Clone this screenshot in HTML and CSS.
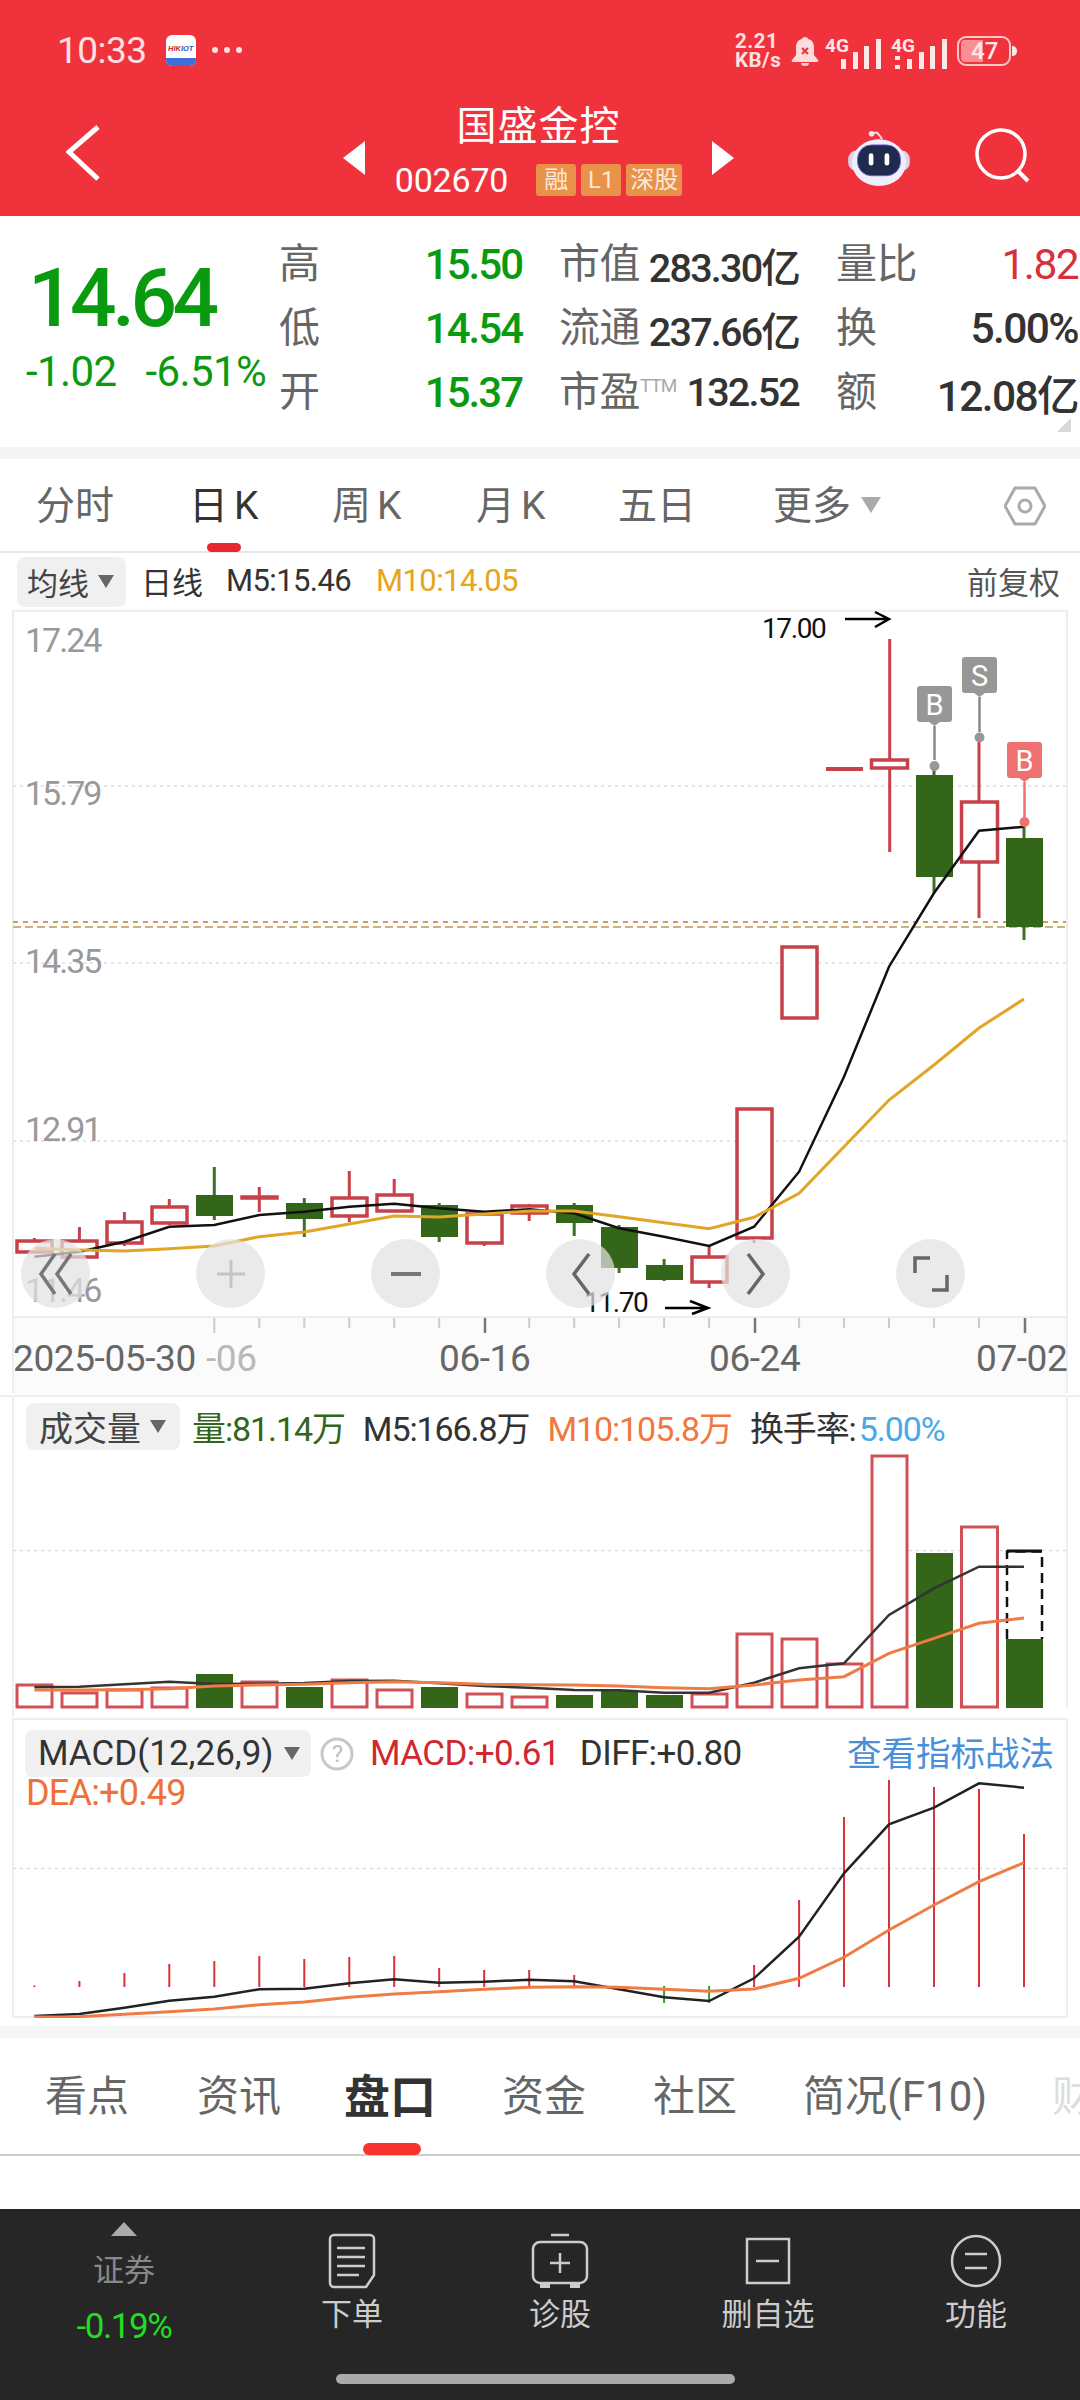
FILE: index.html
```html
<!DOCTYPE html>
<html lang="zh-CN">
<head>
<meta charset="utf-8">
<title>国盛金控 002670</title>
<link rel="stylesheet" href="styles.css">
</head>
<body>
<header class="hdr">
  <div class="status">
    <div class="status-left">
      <span class="clock">10:33</span>
      <svg class="hik" width="30" height="31" viewBox="0 0 30 31"><rect width="30" height="31" rx="6" fill="#fff"/><path d="M0 23h30v2a6 6 0 0 1-6 6H6a6 6 0 0 1-6-6z" fill="#3f6fd8"/><text x="2" y="16" class="hik-t"><tspan fill="#c8281e">HIK</tspan><tspan fill="#2a5cb8">IOT</tspan></text></svg>
      <span class="dots"><i></i><i></i><i></i></span>
    </div>
    <div class="status-right">
      <span class="net"><b>2.21</b><b>KB/s</b></span>
      <svg width="28" height="30" viewBox="0 0 28 30"><path d="M14 1c2 0 3 1 3 2 5 1 6 5 6 9v7l4 5c1 1 0 2-1 2H2c-1 0-2-1-1-2l4-5v-7c0-4 1-8 6-9 0-1 1-2 3-2zM10 27h8a4 3 0 0 1-8 0z" fill="#fcdcdc"/><path d="M11 12l6 6m0-6l-6 6" stroke="#e8323c" stroke-width="2"/></svg>
      <svg width="60" height="38" viewBox="0 -6 60 38"><text x="0" y="14" class="sig-t">4G</text><path d="M16 21h5v10h-5zM28 14h5v17h-5zM39 8h5v23h-5zM51 1h5v30h-5z" fill="#fde8e8"/></svg>
      <svg width="60" height="38" viewBox="0 -6 60 38"><text x="0" y="14" class="sig-t">4G</text><path d="M4 18h5v4H4zM4 27h5v4H4zM16 21h5v10h-5zM28 14h5v17h-5zM39 8h5v23h-5zM51 1h5v30h-5z" fill="#fde8e8"/></svg>
      <svg class="batt" width="61" height="32" viewBox="0 0 61 32"><rect x="1" y="2" width="52" height="28" rx="8" fill="none" stroke="#fbc8c8" stroke-width="2"/><path d="M8 5h18v22H8a4 4 0 0 1-4-4V9a4 4 0 0 1 4-4z" fill="#f88f95"/><path d="M55 11c3 0 5 2 5 5s-2 5-5 5z" fill="#fde8e8"/><text x="14" y="24" class="batt-t">47</text></svg>
    </div>
  </div>
  <div class="nav">
    <svg class="nav-back" width="40" height="60" viewBox="0 0 40 60"><path d="M32 5L3 30l29 27" fill="none" stroke="#fff" stroke-width="5"/></svg>
    <div class="nav-mid">
      <svg width="22" height="34" viewBox="0 0 22 34"><path d="M22 0v34L0 17z" fill="#fff"/></svg>
      <div class="nav-title">
        <div class="name">国盛金控</div>
        <div class="code-row">
          <span class="code">002670</span>
          <span class="tags"><span class="tag">融</span><span class="tag">L1</span><span class="tag">深股</span></span>
        </div>
      </div>
      <svg width="22" height="34" viewBox="0 0 22 34"><path d="M0 0v34l22-17z" fill="#fff"/></svg>
    </div>
    <div class="nav-right">
      <svg width="62" height="56" viewBox="0 0 66 60"><path d="M26 6c1-4 5-4 6-2s3 2 4 6" fill="none" stroke="#e6e4f5" stroke-width="2"/><circle cx="25" cy="4" r="3" fill="#e6e4f5"/><rect x="0" y="22" width="66" height="22" rx="9" fill="#d6d4ee"/><ellipse cx="33" cy="35" rx="29" ry="25" fill="#f0eefa"/><rect x="10" y="16" width="46" height="33" rx="15" fill="#1e2a4e" stroke="#6a5cd8" stroke-width="1"/><rect x="22" y="25" width="5" height="13" rx="2.5" fill="#fff"/><rect x="39" y="25" width="5" height="13" rx="2.5" fill="#fff"/></svg>
      <svg width="56" height="60" viewBox="0 0 56 60"><circle cx="26" cy="26" r="24" fill="none" stroke="#fff" stroke-width="3.5"/><path d="M43 43l10 10" stroke="#fff" stroke-width="4"/></svg>
    </div>
  </div>
</header>

<section class="stats">
  <div class="quote">
    <div class="price">14.64</div>
    <div class="chg"><span>-1.02</span><span>-6.51%</span></div>
  </div>
  <div class="col col-a">
    <div class="st"><span class="lb">高</span><span class="v g">15.50</span></div>
    <div class="st"><span class="lb">低</span><span class="v g">14.54</span></div>
    <div class="st"><span class="lb">开</span><span class="v g">15.37</span></div>
  </div>
  <div class="col col-b">
    <div class="st"><span class="lb">市值</span><span class="v">283.30亿</span></div>
    <div class="st"><span class="lb">流通</span><span class="v">237.66亿</span></div>
    <div class="st"><span class="lb">市盈<sup class="ttm">TTM</sup></span><span class="v">132.52</span></div>
  </div>
  <div class="col col-c">
    <div class="st"><span class="lb">量比</span><span class="v r">1.82</span></div>
    <div class="st"><span class="lb">换</span><span class="v">5.00%</span></div>
    <div class="st"><span class="lb">额</span><span class="v">12.08亿</span></div>
  </div>
  <svg class="corner" width="14" height="14" viewBox="0 0 14 14"><path d="M14 0v14H0z" fill="#d8d8d8"/></svg>
</section>

<div class="band band-a"></div>

<nav class="ktabs">
  <span class="ktab t1">分时</span>
  <span class="ktab t2 on">日K</span>
  <span class="ktab t3">周K</span>
  <span class="ktab t4">月K</span>
  <span class="ktab t5">五日</span>
  <span class="ktab t6">更多<i class="tri tri-lg"></i></span>
  <svg class="hex" width="42" height="40" viewBox="0 0 42 40"><path d="M11 2h20l10 18-10 18H11L1 20z" fill="none" stroke="#aaa" stroke-width="3" stroke-linejoin="round"/><circle cx="21" cy="20" r="6" fill="none" stroke="#aaa" stroke-width="3"/></svg>
</nav>

<div class="legend legend-k">
  <span class="pill pill-k">均线<i class="tri"></i></span>
  <span>日线</span>
  <span class="m5">M5:15.46</span>
  <span class="m10">M10:14.05</span>
  <span class="fq">前复权</span>
</div>

<section class="kpanel">
  <svg class="chart" width="1080" height="785" viewBox="0 610 1080 785">
    <rect x="13" y="1318" width="1054" height="76" fill="#fbfbfb"/>
    <path class="frame" d="M13 1393V611H1067V1393M13 1317H1067"/>
    <path class="grid" d="M13 786H1067M13 963H1067M13 1141H1067"/>
    <path class="ref1" d="M13 922H1066"/>
    <path class="ref2" d="M13 927H1066"/>
    <text class="ylab" x="25" y="652">17.24</text>
    <text class="ylab" x="25" y="805">15.79</text>
    <text class="ylab" x="25" y="973">14.35</text>
    <text class="ylab" x="25" y="1141">12.91</text>
    <text class="ylab" x="25" y="1302">11.46</text>
    <path class="wick-r" d="M34.4 1238V1241M79.4 1227V1241M124.4 1212V1246M169.3 1199V1225M259.3 1187V1212M349.3 1171V1222M394.2 1179V1195M484.2 1213V1246M529.2 1204V1221M709.1 1246V1288M754.1 1109V1243M889.7 639V852M979 737V918"/>
    <path class="wick-g" d="M214.3 1167V1220M304.3 1198V1237M439.2 1203V1242M574.2 1203V1236M619.1 1225V1273M664.1 1259V1281M934 766V893M1024 826V940"/>
    <path class="body-r" d="M17 1241h35v11h-35zM62 1241h35v16h-35zM107 1222h35v21h-35zM152 1207h35v16h-35zM242 1197h35v1h-35zM332 1198h35v18h-35zM377 1195h35v16h-35zM467 1214h35v29h-35zM512 1206h35v7h-35zM692 1257h35v25h-35zM737 1109h35v129h-35zM782 947h35v71h-35zM871.5 760h36v8h-36zM961.5 802h36v60h-36z"/>
    <path class="dash-r" d="M826 769H863"/>
    <path class="body-g" d="M196 1195h37v21h-37zM286 1203h37v16h-37zM421 1205h37v32h-37zM556 1205h37v18h-37zM601 1227h37v41h-37zM646 1265h37v15h-37zM916 775h37v102h-37zM1006 838h37v89h-37z"/>
    <path class="ma5" d="M34.4 1256.7L79.4 1251.7 124.4 1241.7 169.3 1226.7 214.3 1225 259.3 1215 304.3 1211.7 349.3 1206.7 394.2 1203.7 439.2 1208.3 484.2 1211.7 529.2 1209.3 574.2 1213.3 619.1 1228.3 664.1 1236.7 709.1 1246 754.1 1226.7 799.1 1171.7 844 1076.7 889 966.7 934 893 979 830.7 1024 826.7"/>
    <path class="ma10" d="M34.4 1248.3L79.4 1250 124.4 1251 169.3 1248.7 214.3 1246 259.3 1236.7 304.3 1232 349.3 1224 394.2 1216 439.2 1217 484.2 1214 529.2 1211 574.2 1211 619.1 1216.7 664.1 1222.7 709.1 1228.7 754.1 1217.3 799.1 1193.3 844 1146.7 889 1100 934 1065 979 1028 1024 999"/>
    <g class="flag-grey">
      <path d="M920 686h29a3 3 0 0 1 3 3v30a3 3 0 0 1-3 3h-9l-5.500 4-5.500-4h-9a3 3 0 0 1-3-3v-30a3 3 0 0 1 3-3z"/>
      <path class="stem" d="M934.500 726V760"/><circle cx="934.500" cy="766" r="5"/>
      <path d="M965 657h29a3 3 0 0 1 3 3v30a3 3 0 0 1-3 3h-9l-5.500 4-5.500-4h-9a3 3 0 0 1-3-3v-30a3 3 0 0 1 3-3z"/>
      <path class="stem" d="M979.500 697V732"/><circle cx="979.500" cy="737.500" r="5"/>
    </g>
    <g class="flag-red">
      <path d="M1010 742h29a3 3 0 0 1 3 3v30a3 3 0 0 1-3 3h-9l-5.500 4-5.500-4h-9a3 3 0 0 1-3-3v-30a3 3 0 0 1 3-3z"/>
      <path class="stem" d="M1024.500 782V818"/><circle cx="1024.500" cy="822" r="5"/>
    </g>
    <text class="flag-t" x="934.500" y="715">B</text>
    <text class="flag-t" x="979.500" y="686">S</text>
    <text class="flag-t" x="1024.500" y="771">B</text>
    <text class="mark" x="762" y="638">17.00</text>
    <path class="arrow" d="M845 619H889M875 612L889 619 875 627"/>
    <text class="mark" x="584" y="1312">11.70</text>
    <path class="arrow" d="M665 1308H708M690 1301L708 1308 692 1314"/>
    <path class="tick-l" d="M214.300 1318V1333"/>
    <path class="tick-s" d="M259.300 1318V1328M304.300 1318V1328M349.300 1318V1328M394.200 1318V1328M439.200 1318V1328M529.200 1318V1328M574.200 1318V1328M619.100 1318V1328M664.100 1318V1328M709.100 1318V1328M799.100 1318V1328M844 1318V1328M889 1318V1328M934 1318V1328M979 1318V1328"/>
    <path class="tick-d" d="M485 1318V1333M755 1318V1333M1025 1318V1333"/>
    <text class="xlab" x="13" y="1371">2025-05-30</text>
    <text class="xlab xlab-f" x="206" y="1371">-06</text>
    <text class="xlab" x="439" y="1371">06-16</text>
    <text class="xlab" x="709" y="1371">06-24</text>
    <text class="xlab" x="976" y="1371">07-02</text>
  </svg>
  <div class="ctrls">
    <span class="ctrl"><svg width="40" height="44" viewBox="0 0 40 44"><path d="M19 2L5 22l14 20M35 2L21 22l14 20" fill="none" stroke="#777" stroke-width="3.500"/></svg></span>
    <span class="ctrl"><svg width="32" height="32" viewBox="0 0 32 32"><path d="M16 2v28M2 16h28" stroke="#c4c4c4" stroke-width="3"/></svg></span>
    <span class="ctrl"><svg width="32" height="32" viewBox="0 0 32 32"><path d="M1 16h30" stroke="#777" stroke-width="4"/></svg></span>
    <span class="ctrl"><svg width="22" height="44" viewBox="0 0 22 44"><path d="M19 2L4 22l15 20" fill="none" stroke="#666" stroke-width="3.500"/></svg></span>
    <span class="ctrl"><svg width="22" height="44" viewBox="0 0 22 44"><path d="M3 2l15 20L3 42" fill="none" stroke="#666" stroke-width="3.500"/></svg></span>
    <span class="ctrl"><svg width="36" height="36" viewBox="0 0 36 36"><path d="M17 2H2v15M19 34h15V19" fill="none" stroke="#666" stroke-width="3.500"/></svg></span>
  </div>
</section>

<section class="vpanel">
  <div class="legend legend-v">
    <span class="pill pill-v">成交量<i class="tri"></i></span>
    <span class="vol">量:81.14万</span>
    <span>M5:166.8万</span>
    <span class="o">M10:105.8万</span>
    <span class="hs">换手率:<b class="bl">5.00%</b></span>
  </div>
  <svg class="sub" width="1080" height="267" viewBox="0 1453 1080 267">
    <path class="frame-v" d="M13 1453V1716M1067 1453V1708"/>
    <path class="grid" d="M13 1550.500H1067"/>
    <path class="vbar-r" d="M17 1685h35v22h-35zM62 1693h35v14h-35zM107 1690h35v17h-35zM152 1688h35v19h-35zM242 1682h35v25h-35zM332 1680h35v27h-35zM377 1690h35v17h-35zM467 1694h35v13h-35zM512 1697h35v10h-35zM692 1694h35v13h-35zM737 1634h35v73h-35zM782 1639h35v68h-35zM827 1664h35v43h-35zM872 1456h35v251h-35zM961.500 1527h36v180h-36z"/>
    <path class="vbar-g" d="M196 1674h37v34h-37zM421 1687h37v21h-37zM286 1687h37v21h-37zM556 1695h37v13h-37zM601 1690h37v18h-37zM646 1695h37v13h-37zM916 1553h37v155h-37zM1006 1639h37v69h-37z"/>
    <path class="vdash" d="M1007 1639V1551.500H1042V1639"/>
    <path class="vcap" d="M1007 1551H1042"/>
    <path class="vm5" d="M34.400 1687.300L79.400 1686.700 124.400 1684.300 169.300 1681.700 214.300 1684 259.300 1683.700 304.300 1683 349.300 1681 394.200 1680.700 439.200 1683.300 484.200 1686 529.200 1687.700 574.200 1690 619.100 1690.300 664.100 1692.700 709.100 1692.700 754.100 1682.700 799.100 1668.300 844 1663.300 889 1615 934 1588.300 979 1566.700 1024 1566.700"/>
    <path class="vm10" d="M34.400 1690L79.400 1690 124.400 1689.700 169.300 1688.700 214.300 1686 259.300 1685 304.300 1684.300 349.300 1682.700 394.200 1681.700 439.200 1682.700 484.200 1684.300 529.200 1684.700 574.200 1685 619.100 1686 664.100 1687.700 709.100 1688.700 754.100 1685 799.100 1680 844 1676.700 889 1653.300 934 1638.300 979 1623.300 1024 1618"/>
  </svg>
</section>

<section class="mpanel">
  <div class="legend legend-m">
    <span class="pill pill-m">MACD(12,26,9)<i class="tri"></i></span>
    <svg class="help" width="34" height="34" viewBox="0 0 34 34"><circle cx="17" cy="17" r="15" fill="none" stroke="#c8c8c8" stroke-width="3"/><text class="help-t" x="17" y="25">?</text></svg>
    <span class="dred">MACD:+0.61</span>
    <span>DIFF:+0.80</span>
    <span class="link">查看指标战法</span>
  </div>
  <div class="dea">DEA:+0.49</div>
  <svg class="macd" width="1080" height="238" viewBox="0 1780 1080 238">
    <path class="grid" d="M13 1868.500H1067"/>
    <path class="hist-r" d="M34.400 1985.500V1987M79.400 1981V1987M124.400 1973V1987M169.300 1964V1987M214.300 1961V1987M259.300 1956V1987M304.300 1959V1987M349.300 1957V1987M394.200 1956V1987M439.200 1968V1987M484.200 1970V1987M529.200 1970V1987M574.200 1975V1987M754.100 1965V1987M799.100 1900V1987M844 1817V1987M889 1773V1987M934 1787V1987M979 1789V1987M1024 1834V1987"/>
    <path class="hist-g" d="M664.100 1986V2003M709.100 1986V2003"/>
    <path class="dif" d="M34.400 2016L79.400 2014 124.400 2007.700 169.300 2000.700 214.300 1996.700 259.300 1989.300 304.300 1988.700 349.300 1983.300 394.200 1979.300 439.200 1982.700 484.200 1981.700 529.200 1979.700 574.200 1981.300 619.100 1989.300 664.100 1997.300 709.100 2001 754.100 1978.300 799.100 1936.700 844 1873.300 889 1824.300 934 1807.700 979 1783.300 1024 1787.700"/>
    <path class="dea-l" d="M34.400 2017L79.400 2016.700 124.400 2014.300 169.300 2011.700 214.300 2009 259.300 2004.700 304.300 2002 349.300 1997.300 394.200 1994 439.200 1991.700 484.200 1989.300 529.200 1987.300 574.200 1986.700 619.100 1987.300 664.100 1989.300 709.100 1991.300 754.100 1989 799.100 1978.300 844 1957.300 889 1930 934 1905 979 1881.700 1024 1862.700"/>
  </svg>
</section>

<div class="band band-b"></div>

<nav class="dtabs">
  <span class="dtab">看点</span>
  <span class="dtab">资讯</span>
  <span class="dtab on">盘口</span>
  <span class="dtab">资金</span>
  <span class="dtab">社区</span>
  <span class="dtab">简况(F10)</span>
  <span class="dtab fade">财</span>
</nav>

<div class="blank"></div>

<footer class="foot">
  <div class="fcol f-idx">
    <svg width="26" height="14" viewBox="0 0 26 14"><path d="M13 0l13 14H0z" fill="#aaa"/></svg>
    <span class="f-name">证券</span>
    <span class="f-pct">-0.19%</span>
  </div>
  <div class="fcol">
    <svg class="f-ico" width="48" height="56" viewBox="0 0 48 56"><path d="M6 2h36a4 4 0 0 1 4 4v36l-8 12H6a4 4 0 0 1-4-4V6a4 4 0 0 1 4-4z" fill="none" stroke="#ccc" stroke-width="2.500"/><path d="M9 15h28M9 24h28M9 33h28M9 42h22" stroke="#ccc" stroke-width="2.500"/></svg>
    <span>下单</span>
  </div>
  <div class="fcol">
    <svg class="f-ico" width="58" height="56" viewBox="0 0 58 56"><path d="M20 2h18" stroke="#ccc" stroke-width="2.500"/><rect x="2" y="9" width="54" height="41" rx="7" fill="none" stroke="#ccc" stroke-width="2.500"/><path d="M29 20v20M19 30h20" stroke="#ccc" stroke-width="2.500"/><path d="M9 50h10v5H9zM39 50h10v5H39z" fill="#ccc"/></svg>
    <span>诊股</span>
  </div>
  <div class="fcol">
    <svg class="f-ico" width="46" height="56" viewBox="0 0 46 56"><rect x="2" y="6" width="42" height="44" fill="none" stroke="#ccc" stroke-width="2.500"/><path d="M11 28h23" stroke="#ccc" stroke-width="2.500"/></svg>
    <span>删自选</span>
  </div>
  <div class="fcol">
    <svg class="f-ico" width="52" height="56" viewBox="0 0 52 56"><ellipse cx="26" cy="28" rx="24" ry="25" fill="none" stroke="#ccc" stroke-width="2.500"/><path d="M15 21h22M15 35h22" stroke="#ccc" stroke-width="2.500"/></svg>
    <span>功能</span>
  </div>
  <div class="homebar"></div>
</footer>
</body>
</html>
```
FILE: styles.css
```css
* { box-sizing: border-box; }
html, body { margin: 0; padding: 0; }
body {
  width: 1080px;
  height: 2400px;
  overflow: hidden;
  background: #fff;
  color: #333;
  font-family: Roboto, "Noto Sans CJK SC", sans-serif;
  position: relative;
}
svg { display: block; }
i { font-style: normal; }

/* header */
.hdr { height: 216px; background: #f0323c; color: #fff; }
.status { height: 100px; display: flex; justify-content: space-between; align-items: flex-start; padding: 34px 62px 0 57px; }
.status-left { display: flex; align-items: center; height: 32px; }
.clock { font-size: 37px; color: #fde0e0; letter-spacing: -.5px; width: 109px; }
.dots { display: flex; gap: 6px; margin-left: 16px; }
.dots i { width: 6px; height: 6px; border-radius: 50%; background: #fde0e0; }
.hik-t { font: italic 700 7.500px "Liberation Sans", sans-serif; }
.status-right { display: flex; align-items: center; gap: 6px; height: 34px; }
.net { display: flex; flex-direction: column; line-height: 19px; font-size: 20.500px; color: #fde0e0; width: 50px; }
.net b { font-weight: 700; letter-spacing: .5px; }
.sig-t { font: 700 19px Roboto, sans-serif; fill: #fde8e8; }
.batt-t { font: 500 24px Roboto, sans-serif; fill: #fde8e8; }
.nav { height: 116px; display: flex; align-items: center; position: relative; }
.nav-back { position: absolute; left: 66px; top: 22px; }
.nav-mid { display: flex; align-items: center; margin-left: 343px; width: 391px; justify-content: space-between; }
.nav-title { display: flex; flex-direction: column; align-items: center; margin-top: -2px; }
.name { font-size: 40px; line-height: 48px; color: #fff; letter-spacing: 1px; margin-top: -10px; }
.code-row { display: flex; align-items: center; gap: 28px; height: 44px; margin-top: 7px; }
.code { font-size: 34px; letter-spacing: -.2px; color: #fff; }
.tags { display: flex; gap: 5px; }
.tag { height: 32px; line-height: 32px; min-width: 40px; padding: 0 4px; text-align: center; background: #e8924a; border-radius: 3px; font-size: 24px; color: #fde8d8; }
.nav-right { display: flex; gap: 65px; align-items: center; margin-left: 114px; }

/* stats */
.stats { height: 231px; display: flex; position: relative; padding-top: 16px; }
.quote { width: 281px; padding: 26px 0 0 26px; }
.price { font-size: 82px; line-height: 80px; font-weight: 500; color: #0a9a10; letter-spacing: -4.5px; margin-left: 2px; }
.chg { display: flex; gap: 29px; font-size: 42px; line-height: 44px; color: #0a9a10; margin-top: 12px; letter-spacing: -.6px; }
.col { display: flex; flex-direction: column; }
.col-a { width: 241px; margin-right: 39px; }
.col-b { width: 238px; margin-right: 39px; }
.col-c { width: 240px; }
.st { height: 64px; display: flex; justify-content: space-between; align-items: center; }
.lb { font-size: 41px; color: #666; white-space: nowrap; margin: -8px 0 0 -2px; letter-spacing: -.5px; }
.v { font-size: 42px; font-weight: 400; color: #333; letter-spacing: -2px; white-space: nowrap; }
.col-b .v { font-size: 39.500px; letter-spacing: -1.800px; font-weight: 500; }
.v.g { color: #0a9a10; font-weight: 500; }
.v.r { color: #d8303a; }
.col-c .v { font-size: 42.500px; font-weight: 500; letter-spacing: -1.600px; }
.col-c .v.r { font-weight: 400; }
.ttm { font-size: 19px; color: #aaa; letter-spacing: -1px; vertical-align: 14px; line-height: 0; }
.corner { position: absolute; left: 1057px; top: 202px; }
.band { background: #f5f5f5; height: 12px; }

/* k tabs */
.ktabs { height: 94px; border-bottom: 2px solid #e8e8e8; position: relative; display: block; }
.ktab { position: absolute; top: 21px; font-size: 39px; line-height: 52px; color: #666; white-space: nowrap; }
.t1 { left: 36px; } .t2 { left: 189px; } .t3 { left: 332px; } .t4 { left: 476px; } .t5 { left: 618px; } .t6 { left: 773px; }
.t2, .t3, .t4 { letter-spacing: 6px; }
.ktab.on { color: #333; }
.ktab.on::after { content: ""; position: absolute; left: 18px; top: 63px; width: 34px; height: 9px; border-radius: 5px; background: #e8282e; }
.tri { display: inline-block; width: 0; height: 0; border-left: 8px solid transparent; border-right: 8px solid transparent; border-top: 13px solid #666; margin-left: 10px; vertical-align: middle; }
.tri-lg { border-left-width: 10px; border-right-width: 10px; border-top: 16px solid #aaa; margin-top: -8px; }
.hex { position: absolute; left: 1004px; top: 27px; }

/* legends */
.legend { display: flex; align-items: center; white-space: nowrap; color: #333; }
.legend-k { height: 57px; font-size: 31px; gap: 15px; padding-left: 17px; position: relative; }
.legend-k > span:not(.pill) { margin-top: -2px; }
.pill { background: #f0f0f0; border-radius: 8px; display: flex; align-items: center; }
.pill-k { width: 109px; height: 50px; padding-left: 10px; color: #444; }
.pill-k .tri { margin-left: 9px; }
.m5 { letter-spacing: -.6px; margin-left: 8px; }
.m10 { color: #e5a51c; letter-spacing: -.6px; margin-left: 10px; }
.fq { position: absolute; left: 967px; color: #555; }

/* main panel */
.kpanel { position: relative; height: 785px; }
.chart text { font-family: Roboto, sans-serif; }
.frame { fill: none; stroke: #eee; stroke-width: 2; }
.grid { fill: none; stroke: #ddd; stroke-width: 1.500; stroke-dasharray: 3 4; }
.ref1 { stroke: #c8a060; stroke-width: 2; stroke-dasharray: 5 5; fill: none; }
.ref2 { stroke: #d0b080; stroke-width: 2; stroke-dasharray: 8 4; fill: none; }
.chart .ylab { font-size: 34px; fill: #999; letter-spacing: -2px; }
.wick-r { stroke: #c8404a; stroke-width: 3; fill: none; }
.wick-g { stroke: #3d7028; stroke-width: 3; fill: none; }
.body-r { fill: #fff; stroke: #c8404a; stroke-width: 3.500; }
.dash-r { stroke: #c8404a; stroke-width: 4; fill: none; }
.body-g { fill: #336618; }
.ma5 { fill: none; stroke: #111; stroke-width: 2.500; }
.ma10 { fill: none; stroke: #e2a526; stroke-width: 3; }
.flag-grey { fill: #979797; }
.flag-red { fill: #ee7070; }
.stem { stroke-width: 2.500; fill: none; }
.flag-grey .stem { stroke: #888; }
.flag-red .stem { stroke: #ee7070; }
.chart .flag-t { font-size: 29px; fill: #fff; text-anchor: middle; }
.chart .mark { font-size: 28px; fill: #111; letter-spacing: -1.400px; }
.arrow { fill: none; stroke: #000; stroke-width: 2.500; }
.tick-l { stroke: #ccc; stroke-width: 2; }
.tick-s { stroke: #ccc; stroke-width: 2; }
.tick-d { stroke: #777; stroke-width: 2.500; }
.chart .xlab { font-size: 37px; fill: #666; letter-spacing: -.400px; }
.chart .xlab-f { fill: #b8b8b8; }
.ctrls { position: absolute; left: 21px; top: 629px; display: flex; gap: 106px; }
.ctrl { width: 69px; height: 69px; border-radius: 50%; background: rgba(226,226,226,.72); display: flex; align-items: center; justify-content: center; }

/* sub panels */
.vpanel { height: 323px; border-top: 2px solid #eee; }
.legend-v { height: 56px; font-size: 34px; gap: 18px; margin: 0 12px; padding: 3px 0 0 12px; letter-spacing: -1.100px; border-left: 2px solid #eee; border-right: 2px solid #eee; }
.pill-v { width: 154px; height: 47px; margin-right: -6px; padding-left: 13px; font-size: 34px; letter-spacing: 0; color: #444; }
.pill-v .tri { margin-left: 9px; }
.vol { color: #33661a; }
.o { color: #f07840; }
.bl { font-weight: 400; color: #4aa8e8; margin-left: 3px; }
.frame-v { fill: none; stroke: #eee; stroke-width: 2; }
.vbar-r { fill: #fff; stroke: #d05058; stroke-width: 3; }
.vbar-g { fill: #336618; }
.vdash { fill: none; stroke: #111; stroke-width: 2.500; stroke-dasharray: 10 6; }
.vcap { stroke: #111; stroke-width: 3; }
.vm5 { fill: none; stroke: #333; stroke-width: 2.500; }
.vm10 { fill: none; stroke: #ee7c44; stroke-width: 3; }

.mpanel { height: 300px; margin: 0 12px 8px; width: 1056px; position: relative; border: 2px solid #eee; }
.legend-m { height: 47px; margin-top: 10px; font-size: 35px; padding-left: 11px; letter-spacing: -.6px; position: relative; }
.pill-m { width: 286px; height: 47px; padding-left: 13px; font-size: 35px; letter-spacing: 0; color: #333; }
.help { margin: 0 16px 0 9px; }
.help-t { font: 400 24px Roboto, sans-serif; fill: #c0c0c0; text-anchor: middle; }
.dred { color: #d0282e; margin-right: 20px; }
.link { position: absolute; left: 833px; top: -4px; color: #4a90d9; font-size: 34.500px; letter-spacing: 0; }
.dea { font-size: 36px; line-height: 36px; color: #f0703a; padding-left: 12px; letter-spacing: -.8px; margin-top: -2px; }
.macd { position: absolute; left: -14px; top: 60px; }
.hist-r { stroke: #d8323a; stroke-width: 2; fill: none; }
.hist-g { stroke: #30a030; stroke-width: 2; fill: none; }
.dif { fill: none; stroke: #222; stroke-width: 2.500; }
.dea-l { fill: none; stroke: #ee7c44; stroke-width: 3; }

/* detail tabs */
.dtabs { height: 118px; border-bottom: 2px solid #ccc; position: relative; }
.dtab { position: absolute; top: 34px; font-size: 42px; line-height: 50px; color: #666; white-space: nowrap; }
.dtab:nth-child(1) { left: 45px; }
.dtab:nth-child(2) { left: 197px; }
.dtab:nth-child(3) { left: 344px; top: 32px; font-size: 46px; font-weight: 700; color: #333; line-height: 54px; }
.dtab:nth-child(4) { left: 502px; }
.dtab:nth-child(5) { left: 653px; }
.dtab:nth-child(6) { left: 803px; letter-spacing: .1px; }
.dtab.fade { left: 1052px; color: #ddd; }
.dtab.on::after { content: ""; position: absolute; left: 19px; top: 73px; width: 58px; height: 12px; border-radius: 6px; background: #f8332e; }
.blank { height: 53px; }

/* footer */
.foot { height: 191px; background: #262626; display: grid; grid-template-columns: 248px repeat(4, 208px); color: #ccc; font-size: 31px; position: relative; }
.fcol { display: flex; flex-direction: column; align-items: center; padding-top: 24px; }
.fcol > span { line-height: 40px; margin-top: 6px; }
.f-idx { padding-top: 13px; }
.f-idx .f-name { color: #888; margin-top: 15px; }
.f-idx .f-pct { color: #22dd22; font-size: 35px; letter-spacing: -1.400px; margin-top: 16px; }
.homebar { position: absolute; left: 336px; top: 165px; width: 399px; height: 10px; border-radius: 5px; background: #aaa; }
```
